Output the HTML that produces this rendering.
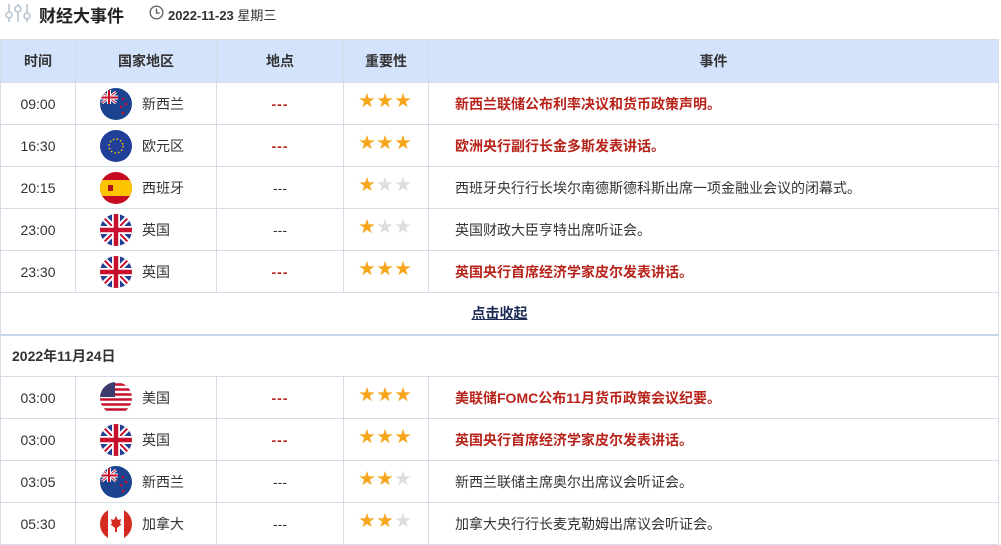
<!DOCTYPE html>
<html><head><meta charset="utf-8"><style>
*{margin:0;padding:0;box-sizing:border-box}
body{width:1001px;height:539px;overflow:hidden;background:#fff;font-family:"Liberation Sans","Noto Sans CJK SC",sans-serif;color:#333;font-size:14px;position:relative}
.top{position:absolute;left:0;top:0;height:28px;width:100%}
.title{position:absolute;left:39px;top:2px;font-size:17px;font-weight:bold;color:#222}
.date{position:absolute;left:168px;top:5px;font-size:13px;font-weight:bold;color:#333}
table{position:absolute;left:0;top:39px;width:999px;border-collapse:collapse;table-layout:fixed}
td,th{border:1px solid #d6dde8;height:42px;text-align:center;vertical-align:middle;white-space:nowrap}
th{background:#d3e3fb;font-weight:bold;font-size:14px;color:#333;height:43px}
.ev{text-align:left;padding-left:26px}
.red{color:#b8241c;font-weight:bold}
.dash{color:#b8241c;font-weight:bold;letter-spacing:1px}
.c{display:flex;align-items:center;padding-left:24px}
.c svg{margin-right:10px;flex:none}
.star{font-size:16px;letter-spacing:2px;color:#f6a51c;line-height:16px}
.star span{display:inline-block;position:relative;top:-2px}
.star .g{color:#ddd}
.fold td{height:42px;border-bottom:2px solid #c8d6ea}
.fold a{color:#1c2b55;font-weight:bold;text-decoration:underline}
.dt td{text-align:left;padding-left:11px;font-weight:bold;color:#333;height:42px}
</style></head><body>
<div class="top">
<svg style="position:absolute;left:5px;top:2px" width="26" height="22" viewBox="0 0 26 22" fill="none" stroke="#b8c4d2" stroke-width="1.6"><line x1="4" y1="2" x2="4" y2="20"/><circle cx="4" cy="13" r="3" fill="#fff"/><line x1="13" y1="2" x2="13" y2="20"/><circle cx="13" cy="7" r="3" fill="#fff"/><line x1="22" y1="2" x2="22" y2="20"/><circle cx="22" cy="14" r="3" fill="#fff"/></svg>
<div class="title">财经大事件</div>
<svg style="position:absolute;left:149px;top:5px" width="15" height="15" viewBox="0 0 15 15" fill="none" stroke="#666" stroke-width="1.4"><circle cx="7.5" cy="7.5" r="6.3"/><path d="M7.5 3.5V8H10.5"/></svg>
<div class="date">2022-11-23 <span style="font-weight:normal">星期三</span></div>
</div>
<svg width="0" height="0" style="position:absolute"><defs>
<clipPath id="cc"><circle cx="16" cy="16" r="16"/></clipPath>
<g id="nz"><g clip-path="url(#cc)"><rect width="32" height="32" fill="#1b4390"/><path d="M2 4L16 15M16 4L2 15" stroke="#fff" stroke-width="3"/><path d="M2 4L16 15M16 4L2 15" stroke="#c8102e" stroke-width="1"/><path d="M9 2V16M0 9.5H18" stroke="#fff" stroke-width="4"/><path d="M9 2V16M0 9.5H18" stroke="#c8102e" stroke-width="2"/><circle cx="23" cy="11" r="1.3" fill="#c8102e"/><circle cx="26" cy="16" r="1.3" fill="#c8102e"/><circle cx="21" cy="19" r="1.3" fill="#c8102e"/><circle cx="23" cy="25" r="1.3" fill="#c8102e"/></g></g>
<g id="eu"><circle cx="16" cy="16" r="16" fill="#1f3f99"/><circle cx="16" cy="16" r="7" fill="none" stroke="#ffcc00" stroke-width="1.5" stroke-dasharray="1.5 2.2"/></g>
<g id="es"><g clip-path="url(#cc)"><rect width="32" height="32" fill="#c60b1e"/><rect y="8" width="32" height="16" fill="#ffc400"/><rect x="8" y="13" width="5" height="6" fill="#ad1519"/></g></g>
<g id="uk"><g clip-path="url(#cc)"><rect width="32" height="32" fill="#1f3e8c"/><path d="M0 0L32 32M32 0L0 32" stroke="#fff" stroke-width="6"/><path d="M0 0L32 32M32 0L0 32" stroke="#c8102e" stroke-width="2"/><path d="M16 0V32M0 16H32" stroke="#fff" stroke-width="8"/><path d="M16 0V32M0 16H32" stroke="#c8102e" stroke-width="4.5"/></g></g>
<g id="us"><g clip-path="url(#cc)"><rect width="32" height="32" fill="#fff"/><path d="M0 2.5H32M0 7.5H32M0 12.5H32M0 17.5H32M0 22.5H32M0 27.5H32" stroke="#c8102e" stroke-width="2.5"/><rect width="15" height="15" fill="#3c3b6e"/></g></g>
<g id="ca"><g clip-path="url(#cc)"><rect width="32" height="32" fill="#fff"/><rect width="8" height="32" fill="#d52b1e"/><rect x="24" width="8" height="32" fill="#d52b1e"/><path d="M16 8L18 12L21 11L20 16L22 16L17 20L17 24L15 24L15 20L10 16L12 16L11 11L14 12Z" fill="#d52b1e"/></g></g>
</defs></svg>
<table>
<colgroup><col style="width:75px"><col style="width:141px"><col style="width:127px"><col style="width:85px"><col></colgroup>
<tr><th>时间</th><th>国家地区</th><th>地点</th><th>重要性</th><th>事件</th></tr>
<tr><td>09:00</td><td><div class="c"><svg width="32" height="32"><use href="#nz"/></svg>新西兰</div></td><td class="dash">---</td><td class="star"><span>★★★</span></td><td class="ev red">新西兰联储公布利率决议和货币政策声明。</td></tr>
<tr><td>16:30</td><td><div class="c"><svg width="32" height="32"><use href="#eu"/></svg>欧元区</div></td><td class="dash">---</td><td class="star"><span>★★★</span></td><td class="ev red">欧洲央行副行长金多斯发表讲话。</td></tr>
<tr><td>20:15</td><td><div class="c"><svg width="32" height="32"><use href="#es"/></svg>西班牙</div></td><td>---</td><td class="star"><span>★<b class="g" style="font-weight:normal">★★</b></span></td><td class="ev">西班牙央行行长埃尔南德斯德科斯出席一项金融业会议的闭幕式。</td></tr>
<tr><td>23:00</td><td><div class="c"><svg width="32" height="32"><use href="#uk"/></svg>英国</div></td><td>---</td><td class="star"><span>★<b class="g" style="font-weight:normal">★★</b></span></td><td class="ev">英国财政大臣亨特出席听证会。</td></tr>
<tr><td>23:30</td><td><div class="c"><svg width="32" height="32"><use href="#uk"/></svg>英国</div></td><td class="dash">---</td><td class="star"><span>★★★</span></td><td class="ev red">英国央行首席经济学家皮尔发表讲话。</td></tr>
<tr class="fold"><td colspan="5"><a>点击收起</a></td></tr>
<tr class="dt"><td colspan="5">2022年11月24日</td></tr>
<tr><td>03:00</td><td><div class="c"><svg width="32" height="32"><use href="#us"/></svg>美国</div></td><td class="dash">---</td><td class="star"><span>★★★</span></td><td class="ev red">美联储FOMC公布11月货币政策会议纪要。</td></tr>
<tr><td>03:00</td><td><div class="c"><svg width="32" height="32"><use href="#uk"/></svg>英国</div></td><td class="dash">---</td><td class="star"><span>★★★</span></td><td class="ev red">英国央行首席经济学家皮尔发表讲话。</td></tr>
<tr><td>03:05</td><td><div class="c"><svg width="32" height="32"><use href="#nz"/></svg>新西兰</div></td><td>---</td><td class="star"><span>★★<b class="g" style="font-weight:normal">★</b></span></td><td class="ev">新西兰联储主席奥尔出席议会听证会。</td></tr>
<tr><td>05:30</td><td><div class="c"><svg width="32" height="32"><use href="#ca"/></svg>加拿大</div></td><td>---</td><td class="star"><span>★★<b class="g" style="font-weight:normal">★</b></span></td><td class="ev">加拿大央行行长麦克勒姆出席议会听证会。</td></tr>
</table>
</body></html>
